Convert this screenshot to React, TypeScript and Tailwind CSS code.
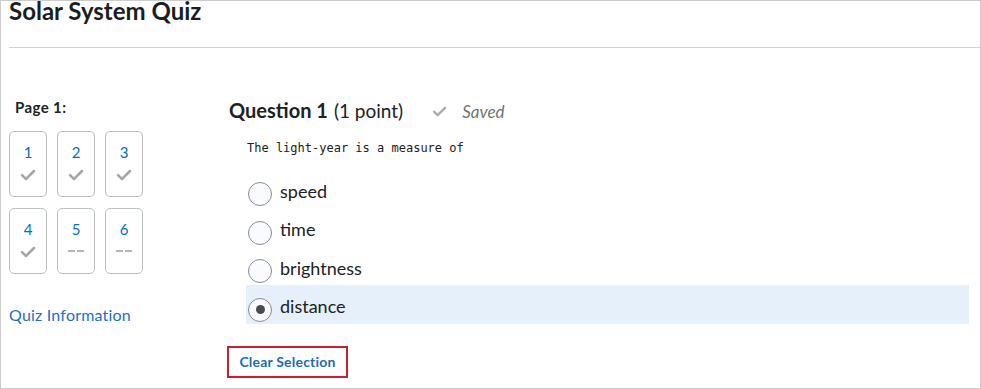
import React from "react";

const tiles = [
  { n: "1", done: true },
  { n: "2", done: true },
  { n: "3", done: true },
  { n: "4", done: true },
  { n: "5", done: false },
  { n: "6", done: false },
];

const options = ["speed", "time", "brightness", "distance"];

const Check = ({ className }: { className?: string }) => (
  <svg viewBox="0 0 16 12" className={className} fill="none">
    <path
      d="M2 6.2 L6 10 L14 2"
      stroke="currentColor"
      strokeWidth="2.5"
      strokeLinecap="round"
      strokeLinejoin="round"
    />
  </svg>
);

const Tile = ({ n, done }: { n: string; done: boolean }) => (
  <div className="w-[38px] h-[66px] rounded-[5px] border border-[#b9bec2] flex flex-col items-center bg-white">
    <span className="mt-[10px] text-[15px] leading-[20px] text-[#006fbf]">{n}</span>
    {done ? (
      <Check className="mt-[7px] w-[16px] h-[12px] text-[#a1a7ab]" />
    ) : (
      <div className="mt-[11px] flex gap-[2px]">
        <div className="w-[7px] h-[2.5px] bg-[#b3b8bc]" />
        <div className="w-[7px] h-[2.5px] bg-[#b3b8bc]" />
      </div>
    )}
  </div>
);

const Radio = ({ checked }: { checked: boolean }) => (
  <div className="mt-[11px] w-[24px] h-[24px] rounded-full border-[1.5px] border-[#868c8f] bg-[#f9fbff] flex items-center justify-center shrink-0">
    {checked && <div className="w-[9px] h-[9px] rounded-full bg-[#494c4e]" />}
  </div>
);

export default function App() {
  return (
    <div
      className="w-[981px] h-[389px] border border-[#cdcdcd] bg-white"
      style={{ fontFamily: "Lato, 'Noto Sans', sans-serif" }}
    >
      <h1 className="pl-[8px] text-[24px] leading-[20px] font-bold text-[#1c1d1f]">
        Solar System Quiz
      </h1>
      <div className="mt-[26px] ml-[8px] h-px bg-[#cdd5dc]" />

      <div className="flex">
        <div className="w-[228px] shrink-0 pl-[8px]">
          <div className="mt-[51px] ml-[6px] text-[15px] leading-[17px] font-bold tracking-[0.4px] text-[#202122]">
            Page 1:
          </div>
          <div className="mt-[15px] grid grid-cols-[38px_38px_38px] gap-x-[10px] gap-y-[10.5px]">
            {tiles.map((t) => (
              <Tile key={t.n} n={t.n} done={t.done} />
            ))}
          </div>
          <a className="block mt-[31px] text-[16px] leading-[20px] tracking-[0.2px] text-[#1d6fc2]">
            Quiz Information
          </a>
        </div>

        <div className="flex-1 pr-[11px]">
          <div className="mt-[50px] flex items-baseline text-[#202122]">
            <span className="text-[20px] leading-[24px] font-bold">Question 1</span>
            <span className="ml-[6px] text-[19px] leading-[24px]">(1 point)</span>
            <Check className="ml-[29px] w-[15px] h-[11px] text-[#a6acb0] self-center" />
            <span className="ml-[15px] text-[17px] italic text-[#6e7376]">Saved</span>
          </div>
          <p
            className="mt-[15px] ml-[18px] text-[12px] leading-[16px] text-[#202122]"
            style={{ fontFamily: "'DejaVu Sans Mono', monospace" }}
          >
            The light-year is a measure of
          </p>
          <div className="mt-[14px] ml-[17px] flex flex-col">
            {options.map((o) => {
              const sel = o === "distance";
              return (
                <div
                  key={o}
                  className={`h-[38.5px] pl-[2px] flex items-center gap-[8px] ${sel ? "bg-[#e6f0fa]" : ""}`}
                >
                  <Radio checked={sel} />
                  <span className="mt-[4px] text-[18px] leading-[30px] text-[#202122]">{o}</span>
                </div>
              );
            })}
          </div>
          <button className="mt-[22px] -ml-[2px] w-[121px] h-[32px] border-2 border-[#c8202c] text-[14px] font-bold tracking-[0.2px] text-[#1c6bb7]">
            Clear Selection
          </button>
        </div>
      </div>
    </div>
  );
}
